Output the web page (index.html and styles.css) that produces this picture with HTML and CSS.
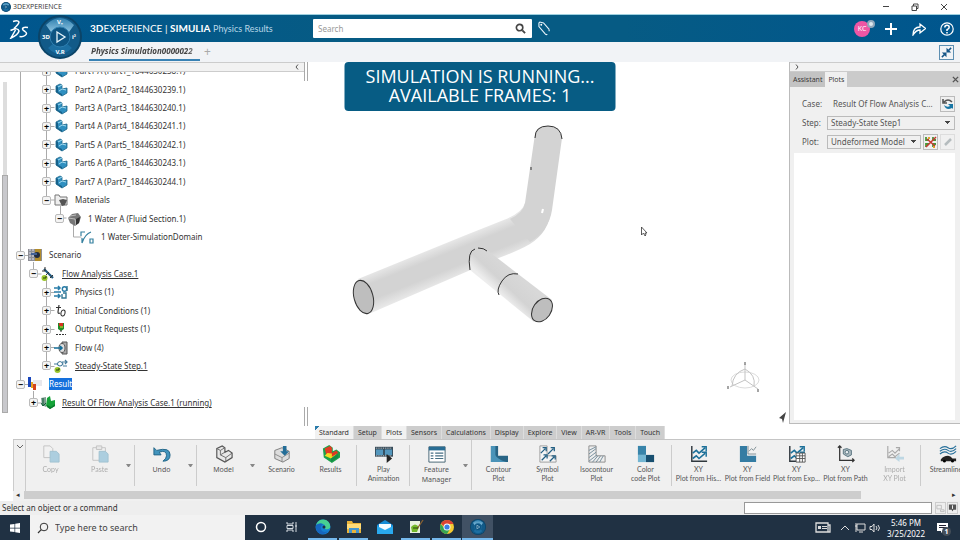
FILE: index.html
```
<!DOCTYPE html>
<html lang="en">

<head>
  <meta charset="UTF-8">
  <meta name="viewport" content="width=device-width,initial-scale=1.0">
  <title>3DEXPERIENCE</title>
  <link rel="stylesheet" href="styles.css">
</head>

<body>
  <!-- shared icons -->
  <svg class="defs" aria-hidden="true">
    <linearGradient id="dome" x1="0" y1="0" x2="0" y2="1">
      <stop offset="0" stop-color="#2f7fae"/><stop offset="1" stop-color="#8cc3e0"/>
    </linearGradient>
    <symbol id="compass" viewBox="0 0 44 44">
      <circle cx="22" cy="22" r="22" fill="#0b4468"/>
      <circle cx="22" cy="22" r="20" fill="#125a88"/>
      <path d="M8 10Q22-4 36 10L31 17Q22 12 13 17Z" fill="url(#dome)"/>
      <path d="M10 33Q22 45 34 33L28 28Q22 31 16 28Z" fill="#1c6fa2"/>
      <circle cx="22" cy="22" r="10" fill="#0d5482" stroke="#2f7fb0"/>
      <path d="M19 17l8 5-8 5Z" fill="none" stroke="#e6f4fb" stroke-width="1.3"/>
    </symbol>
    <symbol id="part" viewBox="0 0 14 14">
      <path d="M2 3l4-2 2 1v4l5-1 0 5-5 3-6-4Z" fill="#2f8fc0" stroke="#1d6488" stroke-width=".8"/>
      <path d="M2 3l2 1v5l4 2v2L2 9Z" fill="#17618a"/>
      <path d="M4 4l4-2M5 8l3-2 4 1" stroke="#a3dcf2" fill="none"/>
    </symbol>
    <symbol id="chart" viewBox="0 0 20 20">
      <path d="M2 1v17h17" fill="none" stroke="#30383e" stroke-width="1.6"/>
      <path d="M3 9l4-3 3 3 7-6M3 15l4-3 3 3 7-6" fill="none" stroke="#1c7099" stroke-width="1.8"/>
      <path d="M13 2h5v5M13 8h5v5" fill="none" stroke="#1c7099" stroke-width="1.6"/>
    </symbol>
  </svg>

  <header class="titlebar">
    <svg class="app-icon"><use href="#compass"/></svg>
    <span class="app-title">3DEXPERIENCE</span>
    <div class="window-buttons">
      <button aria-label="Minimize"><svg viewBox="0 0 8 8"><path d="M1 3.500h6"/></svg></button>
      <button aria-label="Restore"><svg viewBox="0 0 8 8"><path d="M1 3h4.500v4.500H1ZM2.500 3V1H7v4.500H5.500"/></svg></button>
      <button aria-label="Close"><svg viewBox="0 0 8 8"><path d="M1 1l6 6M7 1l-6 6"/></svg></button>
    </div>
  </header>

  <div class="topbar">
    <svg class="ds-logo" viewBox="0 0 20 20">
      <path d="M4 2.500Q9 1 10 3q0 2-5 6.500M1.500 11.500Q9 8 10 12q-1 4-8 7L6.500 11M19 8.500q-5-1-5.500 1.500 0 1 2.500 2.500 3 2 0 4-2 1.500-5.500 1" fill="none" stroke="#fff" stroke-width="1.500"/>
    </svg>
    <div class="brand"><b>3D</b>EXPERIENCE | <b>SIMULIA</b> <small>Physics Results</small></div>
    <form class="search">
      <input type="text" placeholder="Search" aria-label="Search">
      <button type="button" aria-label="Run search"><svg viewBox="0 0 12 12"><circle cx="5" cy="5" r="3.500" fill="none" stroke="#444" stroke-width="1.800"/><path d="M8 8l3 3" stroke="#444" stroke-width="2"/></svg></button>
    </form>
    <button class="tag-button" aria-label="Tags"><svg viewBox="0 0 14 16"><path d="M12 9L6 2 2 1 1 2v4l7 8q1 1 2 0M12 11v-2" fill="none" stroke="#e9f4fa" stroke-width="1.200"/><circle cx="3.500" cy="4" r="1" fill="#fff"/></svg></button>
    <div class="user-tools">
      <button class="avatar" aria-label="Account">KC<i></i></button>
      <button aria-label="Add"><svg viewBox="0 0 14 14"><path d="M7 1v12M1 7h12" stroke="#fff" stroke-width="2"/></svg></button>
      <button aria-label="Share"><svg viewBox="0 0 14 14"><path d="M1 13Q1 5 8 5V2l5.500 4.500L8 11V8Q4 8 1 13Z" fill="none" stroke="#fff" stroke-width="1.300"/></svg></button>
      <button aria-label="Help"><svg viewBox="0 0 14 14"><circle cx="7" cy="7" r="6.200" fill="none" stroke="#fff" stroke-width="1.200"/><path d="M4.800 5.500q0-2.300 2.200-2.300t2.200 2q0 1.300-2.200 2.500v1.300M7 10v1.500" fill="none" stroke="#fff" stroke-width="1.500"/></svg></button>
    </div>
  </div>

  <div class="doc-tabs">
    <a class="doc-tab" href="#"><span>Physics Simulation0000022</span></a>
    <button class="new-tab" aria-label="New tab">+</button>
    <button class="exit-full" aria-label="Exit full screen"><svg viewBox="0 0 14 14"><path d="M2 12l4-4M12 2L8 6" stroke="#155587" stroke-width="1.600"/><path d="M2 7h5v5ZM7 2v5h5Z" fill="#155587"/></svg></button>
  </div>

  <svg class="compass"><use href="#compass"/></svg>
  <div class="compass-text">
    <span>V₊</span>
    <span>3D</span>
    <span>i²</span>
    <span>V,R</span>
  </div>

  <div class="banner">SIMULATION IS RUNNING...<br>AVAILABLE FRAMES: 1</div>

  <main class="workspace">
    <section class="tree-panel">
      <div class="panel-strip"><svg viewBox="0 0 6 8"><path d="M4 1.500L2 4l2 2.500"/></svg></div>
      <div class="tree-scroll"><i></i></div>
      <div class="tree-clip">
        <svg class="guides" width="304" height="354" viewBox="0 72 304 354">
          <path d="M20.500 72v312M46.500 72v128h8M60.500 206v12h6M73.500 225v12h8M20.500 255.500h8M33.500 262v12h8M46.500 280v86M33.500 391v12h8M20.500 384.500h8M46.500 89.500h8M46.500 107.500h8M46.500 126.500h8M46.500 144.500h8M46.500 163.500h8M46.500 181.500h8M46.500 292.500h8M46.500 310.500h8M46.500 329.500h8M46.500 347.500h8M46.500 366.500h8"/>
        </svg>
        <ul class="tree">
          <li class="d2"><button aria-label="Expand">+</button><svg><use href="#part"/></svg><span>Part1 A (Part1_1844630238.1)</span></li>
          <li class="d2"><button aria-label="Expand">+</button><svg><use href="#part"/></svg><span>Part2 A (Part2_1844630239.1)</span></li>
          <li class="d2"><button aria-label="Expand">+</button><svg><use href="#part"/></svg><span>Part3 A (Part3_1844630240.1)</span></li>
          <li class="d2"><button aria-label="Expand">+</button><svg><use href="#part"/></svg><span>Part4 A (Part4_1844630241.1)</span></li>
          <li class="d2"><button aria-label="Expand">+</button><svg><use href="#part"/></svg><span>Part5 A (Part5_1844630242.1)</span></li>
          <li class="d2"><button aria-label="Expand">+</button><svg><use href="#part"/></svg><span>Part6 A (Part6_1844630243.1)</span></li>
          <li class="d2"><button aria-label="Expand">+</button><svg><use href="#part"/></svg><span>Part7 A (Part7_1844630244.1)</span></li>
          <li class="d2"><button aria-label="Collapse">−</button><svg viewBox="0 0 14 14"><path d="M1 12V2h4l1 2h7v8Z" fill="#eee" stroke="#777"/><path d="M5 7l4-1 4 1-2 5-3 1Z" fill="#555"/></svg><span>Materials</span></li>
          <li class="d3"><button aria-label="Collapse">−</button><svg viewBox="0 0 14 14"><path d="M1 6l4-4 6-1 3 4-2 6-4 3-5-3Z" fill="#777"/><path d="M1 6l7 1 1 6M3 4l6-1" stroke="#bbb" fill="none"/><path d="M9 7l4-2-1 6-3 2Z" fill="#333"/></svg><span>1 Water A (Fluid Section.1)</span></li>
          <li class="d4"><i></i><svg viewBox="0 0 14 14"><path d="M2 13Q5 4 11 2M1 6V2h4M10 9h3v4h-3ZM2 8v5" fill="none" stroke="#35809f" stroke-width="1.200"/></svg><span>1 Water-SimulationDomain</span></li>
          <li class="d0"><button aria-label="Collapse">−</button><svg viewBox="0 0 14 14"><path d="M0 1h14v12H0Z" fill="#8d8e94"/><path d="M2 1v12M5 1v12" stroke="#dde" stroke-dasharray="2 1"/><path d="M7 1h6v12H7Z" fill="#b28c2b"/><circle cx="9" cy="7" r="3" fill="#222b40"/><path d="M3 6h6" stroke="#406096" stroke-width="2"/></svg><span>Scenario</span></li>
          <li class="d1"><button aria-label="Collapse">−</button><svg viewBox="0 0 14 14"><path d="M3 2l9 9" stroke="#225a80" stroke-width="2.200"/><path d="M4 0v4H1M8 5l-3 3M12 8l-3 3" fill="none" stroke="#333"/><circle cx="3.500" cy="11" r="3" fill="#9cc62c"/><path d="M2 11h3v-2" fill="none" stroke="#26440d"/></svg><a href="#">Flow Analysis Case.1</a></li>
          <li class="d2"><button aria-label="Expand">+</button><svg viewBox="0 0 14 14"><path d="M0 3h6M0 7h7M0 11h6M4 1l2 2-2 2M4 9l2 2-2 2" fill="none" stroke="#287ca8" stroke-width="1.500"/><circle cx="10.500" cy="4" r="2.200" fill="none" stroke="#287ca8" stroke-width="1.400"/><path d="M13 1v5M9 8h3v5H8V9" fill="none" stroke="#357996" stroke-width="1.400"/></svg><span>Physics (1)</span></li>
          <li class="d2"><button aria-label="Expand">+</button><svg viewBox="0 0 14 14"><path d="M5 1L4 8q0 2 2 1M2 3.500h5" fill="none" stroke="#333" stroke-width="1.200"/><ellipse cx="9" cy="9" rx="2" ry="3" fill="none" stroke="#333" transform="rotate(15 9 9)"/></svg><span>Initial Conditions (1)</span></li>
          <li class="d2"><button aria-label="Expand">+</button><svg viewBox="0 0 14 14"><path d="M4 1h6v6l-3 2-3-2Z" fill="#218d29"/><path d="M5 1h4v3H5Z" fill="#d73223"/><path d="M6 5h3" stroke="#f2d42a"/><path d="M7 8v3M2 12.500h10" stroke="#333" stroke-dasharray="2 1"/></svg><span>Output Requests (1)</span></li>
          <li class="d2"><button aria-label="Expand">+</button><svg viewBox="0 0 14 14"><path d="M8 1h5v12H8Z" fill="#aaa" stroke="#555"/><ellipse cx="8" cy="7" rx="3" ry="4.500" fill="#ddd" stroke="#555"/><path d="M0 7h8M6 5l2 2-2 2" fill="none" stroke="#136d98" stroke-width="1.600"/></svg><span>Flow (4)</span></li>
          <li class="d2"><button aria-label="Expand">+</button><svg viewBox="0 0 14 14"><path d="M0 5h3q3-5 6 0-3 4-6 0M8 3h5M9 7h4M11 1l2 2-2 2" fill="none" stroke="#457c9c" stroke-width="1.200"/><circle cx="3.500" cy="11" r="3" fill="#9cc62c"/><path d="M2 11h3v-2" fill="none" stroke="#26440d"/></svg><a href="#">Steady-State Step.1</a></li>
          <li class="d0"><button aria-label="Collapse">−</button><svg viewBox="0 0 14 14"><path d="M5 3h9v6H5Z" fill="#e8e8ec"/><path d="M0 0h3v10H0Z" fill="#1946bc"/><path d="M3 5h2v6H3Z" fill="#e6a020"/><path d="M5 7h3v6H5Z" fill="#d4421c"/></svg><span class="selected">Result</span></li>
          <li class="d1"><button aria-label="Expand">+</button><svg viewBox="0 0 14 14"><path d="M0 2l5-1v10l-4-2Z" fill="#7f9c91"/><path d="M6 2l3-2 1 5 4-1v6l-5 3-4-3Z" fill="#14a338"/><path d="M6 9l4 2 4-3v2l-5 3-3-2Z" fill="#0b7a2c"/><path d="M2 2v8M0 7l2 3 3-3" fill="none" stroke="#126139"/></svg><a href="#">Result Of Flow Analysis Case.1 (running)</a></li>
        </ul>
      </div>
    </section>

    <div class="splitter"><i></i><i></i></div>

    <section class="viewport">
      <svg viewBox="308 62 481 364">
        <defs>
          <linearGradient id="long" gradientUnits="userSpaceOnUse" x1="420" y1="254" x2="434" y2="289">
            <stop offset="0" stop-color="#e6e6e6"/><stop offset=".25" stop-color="#d3d3d3"/><stop offset=".65" stop-color="#d3d3d3"/><stop offset="1" stop-color="#ececec"/>
          </linearGradient>
          <linearGradient id="branch" gradientUnits="userSpaceOnUse" x1="521" y1="278" x2="503" y2="297">
            <stop offset="0" stop-color="#d8d8d8"/><stop offset=".6" stop-color="#d3d3d3"/><stop offset="1" stop-color="#ededed"/>
          </linearGradient>
        </defs>
        <path d="M505 219.500Q523 212 525 203L551 210Q549 232 530 244 518 251 496 259L371 313 358 279 466 235Z" fill="url(#long)"/>
        <path d="M535 134Q536 126 548 126T562 138L552 210Q549 230 530 242L510 219Q523 213 525 203Z" fill="#d3d3d3"/>
        <path d="M543 209l-1 4" stroke="#fff" stroke-width="2"/>
        <path d="M470 270Q469 252 478 248L487 250 552 300 534 322Z" fill="url(#branch)"/>
        <g stroke="#333" fill="none" stroke-width="1">
          <ellipse cx="363.500" cy="297" rx="9.500" ry="17" transform="rotate(-15 363.500 297)" fill="#bebebe"/>
          <ellipse cx="542" cy="310" rx="9" ry="13" transform="rotate(35 542 310)" fill="#bebebe"/>
          <path d="M535 138Q535 126 548 126T562 139M531 167v3M470 270Q467 251 475 249M478 248Q484 248 487 251M499 295Q496 290 502 281 508 272 518 274"/>
        </g>
        <g fill="none" stroke="#dcdcdc">
          <ellipse cx="745" cy="380" rx="14" ry="8"/>
          <path d="M745 364v16l-15 7M745 380l13 9M732 386Q733 373 745 369 756 375 754 386" stroke="#c3c3c3"/>
          <path d="M745 362v3M728 386v3M758 389v3" stroke="#888" stroke-width="1.500"/>
        </g>
        <path d="M641.500 227v8l2-2 1.500 3 1-1-1-2h2Z" fill="#fff" stroke="#333" stroke-width=".8"/>
        <path d="M786 412l-7 6 3 1 1 4Z" fill="#444"/>
      </svg>
    </section>

    <aside class="side-panel">
      <div class="panel-strip left"><svg viewBox="0 0 6 8"><path d="M2 1.500L4 4 2 6.500"/></svg></div>
      <div class="side-tabs">
        <button>Assistant</button>
        <button class="active">Plots</button>
        <button class="close" aria-label="Close panel"><svg viewBox="0 0 8 8"><path d="M1 1l6 6M7 1l-6 6" stroke="#555" stroke-width="1.600"/></svg></button>
      </div>
      <div class="side-body">
        <div class="field"><span class="name">Case:</span><output>Result Of Flow Analysis C...</output>
          <button class="tool" aria-label="Refresh"><svg viewBox="0 0 12 12"><path d="M1 1v4h4M2 4q4-4 8 0" fill="none" stroke="#555" stroke-width="1.600"/><path d="M11 11V6H6l2 2q-3 2-6-1 2 6 8 3Z" fill="#1876a5"/></svg></button>
        </div>
        <div class="field"><label for="step">Step:</label><select id="step"><option>Steady-State Step1</option></select></div>
        <div class="field"><label for="plot">Plot:</label><select id="plot"><option>Undeformed Model</option></select>
          <button class="tool" aria-label="Plot options"><svg viewBox="0 0 12 12"><path d="M1 1v3h3M8 1v3h3M1 11V8h3M8 11V8h3" fill="none" stroke="#4a9637" stroke-width="1.800"/><path d="M4 1v2M9 10v2" stroke="#e3a42e" stroke-width="2"/><path d="M1 11L11 1M2 3l8 7" stroke="#c63932" stroke-width="1.500"/></svg></button>
          <button class="tool" aria-label="Edit" disabled><svg viewBox="0 0 12 12"><path d="M3 9l6-6" stroke="#b5bcbe" stroke-width="2.500"/></svg></button>
        </div>
        <div class="plot-list"></div>
      </div>
    </aside>
  </main>

  <nav class="ribbon-tabs">
    <button class="active first">Standard</button><button>Setup</button><button class="active">Plots</button><button>Sensors</button><button>Calculations</button><button>Display</button><button>Explore</button><button>View</button><button>AR-VR</button><button>Tools</button><button>Touch</button>
  </nav>

  <div class="ribbon">
    <button class="collapse" aria-label="Collapse toolbar"><svg viewBox="0 0 8 6"><path d="M1 1l3 3 3-3"/></svg></button>
    <div class="commands">
      <button class="cmd off"><svg viewBox="0 0 20 20"><path d="M2 1h7l3 3v10H2Z" fill="#f4f4f4" stroke="#888"/><path d="M9 7h7l3 3v9H9Z" fill="#5aa7cb" stroke="#3d87a8"/></svg>Copy</button>
      <button class="cmd off"><svg viewBox="0 0 20 20"><path d="M2 3h14v14H2Z" fill="#f4f4f4" stroke="#888"/><path d="M6 1h6v4H6Z" fill="#ddd" stroke="#888"/><path d="M9 7h7l3 3v9H9Z" fill="#5aa7cb" stroke="#3d87a8"/></svg>Paste</button>
      <button class="more" aria-label="Paste options"></button>
      <i class="sep"></i>
      <button class="cmd big"><svg viewBox="0 0 20 20"><path d="M1 3v8h8L7 8q8-3 8 4 0 3-4 6 8 0 8-7 0-9-15-5Z" fill="#4294bd" stroke="#1f6284"/></svg>Undo</button>
      <button class="more" aria-label="Undo history"></button>
      <i class="sep"></i>
      <button class="cmd big"><svg viewBox="0 0 20 20"><path d="M2 4l6-3 3 2v5l4-2 4 3v5l-8 5-9-5Z" fill="#e8e8e8" stroke="#555" stroke-width="1.300"/><path d="M2 4l4 2v5l6 3 7-5M6 6l5-3M6 11l5-3M12 14v5" fill="none" stroke="#666"/></svg>Model</button>
      <button class="more" aria-label="Models"></button>
      <button class="cmd"><svg viewBox="0 0 20 20"><path d="M2 6l8-3 8 4v8l-7 4-9-4Z" fill="#ddd" stroke="#777"/><path d="M2 10l8 4 8-5M10 14v5" fill="none" stroke="#888"/><path d="M11 1h4v6h3l-5 5-5-5h3Z" fill="#236d97"/></svg>Scenario</button>
      <button class="cmd"><svg viewBox="0 0 20 20"><path d="M1 4l7-4 4 3v4l4-2 4 3v6l-9 6-9-6Z" fill="#1ea24b"/><path d="M3 4l6-3 2 2v7l-6 2Z" fill="#e43b24"/><path d="M3 12l3-3 10 1-6 5Z" fill="#f3db23"/><path d="M11 9l5-3 2 3-7 4Z" fill="#dd3a22"/><path d="M10 15l8-5v4l-8 5Z" fill="#168d48"/></svg>Results</button>
      <i class="sep"></i>
      <button class="cmd"><svg viewBox="0 0 20 20"><path d="M0 2h20v11H0Z" fill="#354a58"/><path d="M1 5h8v6H1ZM11 5h8v6h-8Z" fill="#5497bd"/><path d="M1 3.500h18M1 12h18" stroke="#ddd" stroke-dasharray="1 1"/><path d="M13 10l6 5-6 5Z" fill="#222"/></svg>Play<br>Animation</button>
      <i class="sep"></i>
      <button class="cmd big"><svg viewBox="0 0 20 20"><path d="M1 2h18v17H1Z" fill="#fff" stroke="#3a5b6c"/><path d="M1 2h18v4H1Z" fill="#286c93"/><path d="M3 9h3M3 12h3M3 15h3M8 9h9M8 12h9M8 15h9" stroke="#456f84" stroke-width="1.300"/></svg>Feature<br>Manager</button>
      <button class="more" aria-label="Feature manager options"></button>
      <i class="sep tall"></i>
      <button class="cmd"><svg viewBox="0 0 20 20"><path d="M1 1h8v11h11v7H1Z" fill="#286485"/><path d="M1 1h5v10q1 4 12 8H1Z" fill="#4a93b8"/></svg>Contour<br>Plot</button>
      <button class="cmd"><svg viewBox="0 0 20 20"><path d="M1 1h8v11h10v7H1Z" fill="#f5f5f5" stroke="#999"/><path d="M2 9l5-5M3 17l5-5M10 10l6-6M12 18l5-5M4 3h4v4M5 11h4v4M13 3h4v4M14 12h4v4" fill="none" stroke="#235f83" stroke-width="1.400"/></svg>Symbol<br>Plot</button>
      <button class="cmd"><svg viewBox="0 0 20 20"><path d="M1 1h8v11h10v7H1Z" fill="#eee" stroke="#888"/><path d="M1 6l8-4M1 10l8-6M1 14l8-6M1 18l9-7M5 19l6-7M9 19l5-7M13 19l4-7" stroke="#6e8998"/></svg>Isocontour<br>Plot</button>
      <button class="cmd"><svg viewBox="0 0 20 20"><path d="M1 1h9v10H1Z" fill="#3884aa"/><path d="M1 11h9v8H1Z" fill="#73b6d3"/><path d="M10 11h9v8h-9Z" fill="#174f70"/></svg>Color<br>code Plot</button>
      <i class="sep"></i>
      <button class="cmd"><svg><use href="#chart"/></svg>XY<br>Plot from His...</button>
      <button class="cmd"><svg viewBox="0 0 20 20"><path d="M1 1h8v11h10v7H1Z" fill="#347ca3"/><path d="M11 7l3-3 2 2 3-4M10 1v9h9" fill="none" stroke="#788990"/></svg>XY<br>Plot from Field</button>
      <button class="cmd"><svg viewBox="0 0 20 20"><use href="#chart"/><path d="M9 9h10v10H9ZM9 12h10M9 15h10M13 9v10M16 9v10" fill="#fff" stroke="#555"/></svg>XY<br>Plot from Exp...</button>
      <button class="cmd"><svg viewBox="0 0 20 20"><path d="M3 1v16h16M1 3l2-2 2 2M17 15l2 2-2 2" fill="none" stroke="#333" stroke-width="1.400"/><path d="M7 5l4-1 5 2v5l-4 2-5-3Z" fill="#aab9bf" stroke="#536f7c"/><circle cx="11" cy="8" r="2" fill="#e9eef0" stroke="#536f7c"/></svg>XY<br>Plot from Path</button>
      <button class="cmd off"><svg viewBox="0 0 20 20"><path d="M2 1v13h9M3 9l4-3 3 3 5-5M3 13l4-3 3 3 5-4M11 3h4v4" fill="none" stroke="#555" stroke-width="1.300"/><path d="M20 13h-5v-3l-5 5 5 4v-3h5Z" fill="#82bad5"/></svg>Import<br>XY Plot</button>
      <i class="sep"></i>
      <button class="cmd"><svg viewBox="0 0 20 20"><path d="M1 4q5-4 9-1t9-2M1 7q5-4 9-1t9-2M1 10q5-4 9-1t9-2" fill="none" stroke="#27709b" stroke-width="1.300"/><path d="M2 16q3-4 8-4 3 0 5 3h4v3H2Z" fill="#222"/><circle cx="6" cy="18" r="1.500"/><circle cx="15" cy="18" r="1.500"/></svg>Streamlines</button>
    </div>
    <div class="ribbon-scroll"><span>◂</span><i></i><span>▸</span></div>
  </div>

  <div class="status">
    <label for="command">Select an object or a command</label>
    <input type="text" id="command">
    <button aria-label="Power input"><svg viewBox="0 0 10 10"><path d="M1 2h5v4H1ZM5 7h4v2H5Z" fill="none" stroke="#bbb"/></svg></button>
    <button aria-label="Messages"><svg viewBox="0 0 10 10"><path d="M1 1h8v6H6L5 9 4 7H1Z" fill="#555"/><path d="M5 2v4" stroke="#fff"/></svg></button>
  </div>

  <footer class="taskbar">
    <button class="start" aria-label="Start"><svg viewBox="0 0 12 12"><path d="M1 2.500L5.500 2v3.700H1ZM6.200 1.800L11 1v4.700H6.200ZM1 6.400h4.500V10L1 9.500ZM6.200 6.400H11V11l-4.800-.8Z" fill="#fff"/></svg></button>
    <label class="os-search"><svg viewBox="0 0 12 12"><circle cx="7" cy="5" r="3.800" fill="none" stroke="#333"/><path d="M4.300 7.700L1 11" stroke="#333" stroke-width="1.200"/></svg><input type="text" placeholder="Type here to search"></label>
    <button class="task" aria-label="Cortana"><svg viewBox="0 0 16 16"><circle cx="8" cy="8" r="4.500" fill="none" stroke="#fff" stroke-width="1.500"/></svg></button>
    <button class="task" aria-label="Task view"><svg viewBox="0 0 16 16"><path d="M3 3v2h6V3M3 13v-2h6v2M3 6.500h6v3H3ZM12 3v10M11 7h2" fill="none" stroke="#d5dce2"/></svg></button>
    <button class="task open" aria-label="Edge"><svg viewBox="0 0 16 16"><circle cx="8" cy="8" r="7.500" fill="#1580d1"/><path d="M1 6Q4-1 11 1q5 3 4 8-2 2-5 1 1-5-3-5-3 0-6 1Z" fill="#47cf92"/><path d="M1 6q4-3 7-1-4 3-1 7 3 2 6 0-3 4-8 3Q0 12 1 6Z" fill="#1667c0"/><circle cx="9" cy="8" r="1.500" fill="#1f3042"/></svg></button>
    <button class="task open" aria-label="File Explorer"><svg viewBox="0 0 16 16"><path d="M1 2h5l1 2h8v10H1Z" fill="#e9b33a"/><path d="M1 5h14v5H1Z" fill="#ffdb78"/><path d="M3 14V9h10v5h-3v-3H6v3Z" fill="#4596cf"/></svg></button>
    <button class="task" aria-label="Mail"><svg viewBox="0 0 16 16"><path d="M0 6l8-5 8 5v8H0Z" fill="#168bd5"/><path d="M2 5h12v4l-6 3-6-3Z" fill="#f5fbff"/><path d="M0 7l8 4 8-4v8H0Z" fill="#29a9ef"/></svg></button>
    <button class="task open" aria-label="Notepad++"><svg viewBox="0 0 16 16"><path d="M2 2h10v12H2Z" fill="#e6f0de"/><path d="M3 8q4-5 8 0l-2 5H4Z" fill="#74b82b"/><path d="M15 1L9 10" stroke="#8a6232" stroke-width="1.300"/><path d="M5 9h5" stroke="#25470f"/></svg></button>
    <button class="task open" aria-label="Chrome"><svg viewBox="0 0 16 16"><circle cx="8" cy="8" r="7" fill="#f4ca31"/><path d="M2 4.500A7 7 0 0 1 14.500 5H8v6Z" fill="#dc4434"/><path d="M1.700 5A7 7 0 0 0 8 15l3-5H6Z" fill="#37a552"/><circle cx="8" cy="8" r="3.500" fill="#fff"/><circle cx="8" cy="8" r="2.600" fill="#3c7fe4"/></svg></button>
    <button class="task current" aria-label="3DEXPERIENCE"><svg><use href="#compass"/></svg></button>
    <div class="tray">
      <svg class="news" viewBox="0 0 16 12"><path d="M1 1h12v9H1ZM13 3h2v7H3" fill="none" stroke="#ddd" stroke-width="1.300"/><path d="M3 4h3v3H3ZM7 4h5v1H7ZM7 6h5v1H7Z" fill="#ddd"/></svg>
      <svg viewBox="0 0 12 12"><path d="M2 8l4-4 4 4" fill="none" stroke="#ddd"/></svg>
      <svg viewBox="0 0 12 12"><path d="M3 2h8v6H3ZM5 10h4M2 1v9M1 4h2" fill="none" stroke="#ddd"/></svg>
      <svg viewBox="0 0 12 12"><path d="M1 4.500h2L5 2v8L3 7.500H1ZM7 4q2 2 0 4M9 3q3 3 0 6" fill="none" stroke="#ddd"/></svg>
      <div class="clock">5:46 PM<br>3/25/2022</div>
      <button class="notes" aria-label="1 notification"><svg viewBox="0 0 12 12"><path d="M0 1h11v8H6l-2 2V9H0Z" fill="#fff"/><path d="M2 3.500h7M2 5.500h7" stroke="#223"/></svg><b>1</b></button>
    </div>
  </footer>
</body>

</html>
```
FILE: styles.css
```
* {
  box-sizing: border-box;
}

body {
  margin: 0;
  height: 100vh;
  display: flex;
  flex-direction: column;
  position: relative;
  overflow: hidden;
  background: #fff;
  color: #333;
  font-family: "Noto Sans", "Open Sans", sans-serif;
  font-size: 8px;
  line-height: 12px;
}

button,
input,
select {
  margin: 0;
  padding: 0;
  border: 0;
  border-radius: 0;
  background: none;
  color: inherit;
  font: inherit;
}

svg {
  display: block;
  flex: none;
}

.defs {
  position: absolute;
  width: 0;
  height: 0;
}

/* window title */
.titlebar {
  display: flex;
  align-items: center;
  height: 14px;
  padding: 0 12px 0 1px;
}

.app-icon {
  width: 10px;
  height: 10px;
  margin-right: 2px;
}

.app-title {
  font-family: "Open Sans", sans-serif;
  font-size: 7px;
}

.window-buttons {
  display: flex;
  gap: 21px;
  margin-left: auto;
}

.window-buttons svg {
  width: 8px;
  height: 8px;
  fill: none;
  stroke: #444;
}

/* blue bar */
.topbar {
  display: flex;
  align-items: center;
  height: 28px;
  padding: 0 6px 0 9px;
  border-top: 1px solid #9ed0df;
  background: linear-gradient(90deg, #00568e, #065b84 35%, #065b84 65%, #00568e);
  color: #fff;
}

.ds-logo {
  width: 20px;
  height: 20px;
}

.brand {
  width: 223px;
  margin-left: 61px;
  font-family: Lato, sans-serif;
  font-size: 10px;
  white-space: nowrap;
}

.brand small {
  font-size: 9px;
  color: #b8d8e8;
}

.search {
  display: flex;
  align-items: center;
  width: 219px;
  height: 19px;
  padding: 0 6px 0 5px;
  background: #fff;
  border-radius: 1px;
}

.search input {
  flex: 1;
  min-width: 0;
  color: #444;
}

.search input::placeholder {
  color: #999;
}

.search svg {
  width: 11px;
  height: 11px;
}

.tag-button {
  margin-left: 6px;
}

.tag-button svg {
  width: 13px;
  height: 15px;
}

.user-tools {
  display: flex;
  align-items: center;
  gap: 14px;
  margin-left: auto;
}

.user-tools svg {
  width: 14px;
  height: 14px;
}

.avatar {
  position: relative;
  width: 16px;
  height: 16px;
  border-radius: 50%;
  background: #ef56a4;
  font-size: 7px;
  line-height: 16px;
}

.avatar i {
  position: absolute;
  top: -1px;
  right: -5px;
  width: 8px;
  height: 8px;
  border: 2px solid #91a8bc;
  border-radius: 50%;
  background: #dde7ee;
}

/* document tabs */
.doc-tabs {
  display: flex;
  height: 20px;
  padding: 0 6px 0 89px;
  background: #f1f3f6;
}

.doc-tab {
  width: 111px;
  height: 19px;
  padding-left: 2px;
  border-bottom: 2px solid #3982b4;
  font-size: 8px;
  font-weight: bold;
  font-style: italic;
  line-height: 17px;
  color: #444;
  text-decoration: none;
  white-space: nowrap;
}

.doc-tab span {
  display: block;
  mask-image: linear-gradient(90deg, #000 88%, rgba(0, 0, 0, .3));
}

.new-tab {
  margin-left: 4px;
  font-size: 12px;
  line-height: 16px;
  color: #aaa;
}

.exit-full {
  align-self: center;
  margin-left: auto;
  border: 1px solid #5d8fb2;
}

.exit-full svg {
  width: 13px;
  height: 13px;
}

.compass {
  position: absolute;
  left: 38px;
  top: 15px;
  width: 44px;
  height: 44px;
}

.compass-text {
  position: absolute;
  left: 38px;
  top: 15px;
  width: 44px;
  height: 44px;
  display: grid;
  grid-template-columns: 1fr 1fr;
  align-items: center;
  justify-items: center;
  color: #fff;
  font-size: 6px;
  font-weight: bold;
}

.compass-text span:first-child,
.compass-text span:last-child {
  grid-column: span 2;
}

.compass-text span:nth-child(2) {
  justify-self: start;
  padding-left: 4px;
}

.compass-text span:nth-child(3) {
  justify-self: end;
  padding-right: 6px;
}

/* running message over the 3D view */
.banner {
  position: absolute;
  top: 62px;
  left: 50%;
  z-index: 1;
  width: 271px;
  padding: 5px 0 6px;
  transform: translateX(-50%);
  border-radius: 4px;
  background: #075c84;
  color: #fff;
  font-family: "Open Sans", sans-serif;
  font-size: 18px;
  line-height: 19px;
  text-align: center;
}

/* workspace */
.workspace {
  display: flex;
  flex: 1;
  min-height: 0;
}

.tree-panel {
  display: grid;
  grid-template-columns: 10px 1fr;
  grid-template-rows: 10px 1fr;
  width: 304px;
  min-height: 0;
}

.panel-strip {
  grid-column: span 2;
  display: flex;
  justify-content: flex-end;
  align-items: center;
  height: 10px;
  padding: 0 4px;
  border-top: 1px solid #ccc;
  border-bottom: 1px solid #ccc;
  background: #f2f2f2;
}

.panel-strip.left {
  justify-content: flex-start;
}

.panel-strip svg {
  width: 6px;
  height: 8px;
  fill: none;
  stroke: #555;
}

.tree-scroll {
  display: flex;
  align-items: flex-end;
  width: 4px;
  margin: 10px 0 13px 3px;
  background: #ddd;
}

.tree-scroll i {
  flex: none;
  width: 6px;
  height: 72%;
  margin-left: -1px;
  border: 1px solid #aaa;
  background: #c8c8cc;
}

.tree-clip {
  position: relative;
  display: flex;
  margin-left: -10px;
  min-height: 0;
  overflow: hidden;
}

.guides {
  position: absolute;
  top: 0;
  left: 0;
  fill: none;
  stroke: #aaa;
}

.tree {
  position: relative;
  display: flex;
  flex: 1;
  flex-direction: column;
  margin: -10px 0 14px;
  padding: 0;
  list-style: none;
}

.tree li {
  display: flex;
  flex: 1;
  align-items: center;
  min-height: 0;
  white-space: nowrap;
}

.tree .d0 { padding-left: 16px; }
.tree .d1 { padding-left: 29px; }
.tree .d2 { padding-left: 42px; }
.tree .d3 { padding-left: 55px; }
.tree .d4 { padding-left: 68px; }

.tree button,
.tree li i {
  width: 9px;
  height: 9px;
  margin-right: 3px;
}

.tree button {
  border: 1px solid #bbb;
  border-radius: 2px;
  background: #f4f4f4;
  color: #000;
  font-size: 9px;
  font-weight: bold;
  line-height: 7px;
}

.tree svg {
  width: 14px;
  height: 14px;
  margin-right: 7px;
}

.tree a {
  color: inherit;
}

.selected {
  background: #1570dc;
  color: #fff;
}

.splitter {
  display: flex;
  flex-direction: column;
  justify-content: space-between;
  width: 4px;
}

.splitter i {
  height: 19px;
  border: 1px solid #aaa;
  border-width: 0 1px;
}

.viewport {
  flex: 1;
  min-width: 0;
}

.viewport svg {
  width: 100%;
  height: 100%;
}

/* right panel */
.side-panel {
  display: flex;
  flex-direction: column;
  width: 171px;
  margin-bottom: 2px;
  border: 1px solid #bbb;
  border-width: 0 0 1px 1px;
  background: #f0f0f0;
}

.side-tabs {
  display: flex;
  height: 15px;
  background: #cbcbcb;
}

.side-tabs button {
  padding: 0 3px;
  background: #c3c3c3;
  font-family: "Open Sans", sans-serif;
  font-size: 7px;
}

.side-tabs .active {
  background: #f0f0f0;
}

.side-tabs .close {
  margin-left: auto;
  padding: 0 1px;
  background: none;
}

.side-tabs .close svg {
  width: 7px;
  height: 7px;
}

.side-body {
  display: flex;
  flex: 1;
  flex-direction: column;
  gap: 3px;
  padding: 9px 5px 3px 4px;
}

.field {
  display: flex;
  align-items: center;
  gap: 2px;
  height: 16px;
  padding-left: 8px;
  color: #555;
}

.field label,
.field .name {
  width: 23px;
}

.field output {
  flex: 1;
  padding-left: 6px;
  white-space: nowrap;
}

.field select {
  flex: 1;
  min-width: 0;
  height: 14px;
  padding: 0 3px;
  border: 1px solid #bbb;
  appearance: none;
  background: linear-gradient(#444, #444) no-repeat right 4px top 4px / 5px 1px,
    linear-gradient(#444, #444) no-repeat right 5px top 5px / 3px 1px,
    linear-gradient(#444, #444) no-repeat right 6px top 6px / 1px 1px;
}

.tool {
  width: 15px;
  height: 16px;
  border: 1px solid #bbb;
}

.tool svg {
  width: 12px;
  height: 12px;
  margin: auto;
}

.tool:disabled {
  border-color: #ddd;
}

.plot-list {
  flex: 1;
  background: #fff;
}

/* ribbon */
.ribbon-tabs {
  display: flex;
  height: 13px;
  margin-left: 315px;
}

.ribbon-tabs button {
  padding: 0 4px;
  border-right: 1px solid #ddd;
  background: #cdcdcd;
  font-size: 7px;
}

.ribbon-tabs .active {
  background: #f1f1f1;
}

.ribbon-tabs .first {
  background: linear-gradient(135deg, #2b7cab 3px, #f1f1f1 3px);
}

.ribbon {
  display: grid;
  grid-template-columns: 13px 1fr;
  grid-template-rows: 51px 10px;
  margin-left: 13px;
  border-top: 1px solid #c5c5c5;
  background: #f0f0f0;
}

.collapse {
  display: flex;
  justify-content: center;
  padding-top: 4px;
  border: 1px solid #ccc;
  border-width: 0 1px;
}

.collapse svg {
  width: 8px;
  height: 6px;
  fill: none;
  stroke: #666;
}

.commands {
  display: flex;
  overflow: hidden;
}

.cmd {
  display: flex;
  flex: none;
  flex-direction: column;
  align-items: center;
  width: 49px;
  padding-top: 5px;
  color: #555;
  font-family: Lato, sans-serif;
  font-size: 7px;
  line-height: 9px;
  white-space: nowrap;
}

.cmd svg {
  width: 18px;
  height: 18px;
  margin-bottom: 2px;
}

.cmd.big {
  font-family: "Noto Sans", sans-serif;
  line-height: 10px;
}

.cmd.off {
  opacity: .45;
}

.more {
  flex: none;
  width: 9px;
}

.more::after {
  content: "";
  display: block;
  margin: 0 2px;
  border: 2px solid transparent;
  border-top: 3px solid #888;
  border-bottom: 0;
}

.sep {
  flex: none;
  width: 1px;
  height: 41px;
  margin: 5px 2px 0 1px;
  background: #ccc;
}

.sep.tall {
  height: 50px;
  margin-top: 0;
}

.ribbon-scroll {
  grid-column: span 2;
  display: flex;
  align-items: center;
  height: 8px;
  padding: 0 4px 0 3px;
  font-size: 7px;
  line-height: 8px;
}

.ribbon-scroll i {
  width: 89%;
  height: 8px;
  margin: 0 auto 0 4px;
  background: #cdcdcd;
}

/* status line */
.status {
  display: flex;
  align-items: center;
  height: 14px;
  padding: 0 2px;
  background: #eee;
}

.status input {
  width: 188px;
  height: 12px;
  margin: 0 2px 0 auto;
  border: 1px solid #999;
  background: #fff;
}

.status button {
  margin-left: 1px;
  border: 1px solid #ccc;
}

.status button svg {
  width: 9px;
  height: 10px;
}

/* windows taskbar */
.taskbar {
  display: flex;
  height: 25px;
  background: #203143;
  color: #fff;
}

.start {
  width: 30px;
}

.start svg {
  width: 12px;
  height: 12px;
  margin: auto;
}

.os-search {
  display: flex;
  align-items: center;
  gap: 6px;
  width: 215px;
  padding-left: 7px;
  background: #f2f2f2;
}

.os-search svg {
  width: 12px;
  height: 12px;
}

.os-search input {
  flex: 1;
  min-width: 0;
  font-size: 9px;
}

.os-search input::placeholder {
  color: #444;
}

.task {
  width: 31px;
  border-bottom: 2px solid transparent;
}

.task svg {
  width: 16px;
  height: 16px;
  margin: auto;
}

.task.open {
  border-image: linear-gradient(90deg, transparent 3px, #76b9ed 3px, #76b9ed 28px, transparent 28px) 2;
}

.task.current {
  border-color: #76b9ed;
  background: #415164;
}

.tray {
  display: flex;
  align-items: center;
  gap: 3px;
  margin-left: auto;
  padding-right: 11px;
}

.tray svg {
  width: 12px;
  height: 12px;
}

.tray .news {
  width: 16px;
  margin-right: 5px;
}

.clock {
  width: 44px;
  line-height: 11px;
  text-align: center;
}

.notes {
  position: relative;
  margin-left: 6px;
}

.notes b {
  position: absolute;
  left: 5px;
  top: 5px;
  width: 9px;
  height: 9px;
  border-radius: 50%;
  background: #444e58;
  font-size: 7px;
  line-height: 9px;
}
```
